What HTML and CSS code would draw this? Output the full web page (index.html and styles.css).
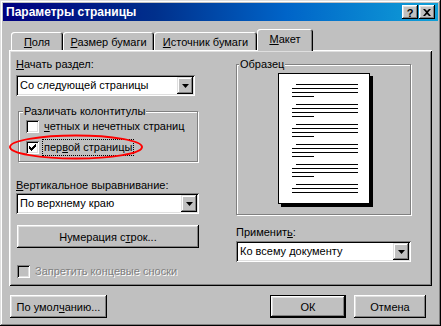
FILE: index.html
```html
<!DOCTYPE html>
<html lang="ru">
<head>
  <meta charset="UTF-8">
  <title>Параметры страницы</title>
  <link rel="stylesheet" href="styles.css">
</head>
<body>
  <div class="window">
    <div class="titlebar">
      <span class="title">Параметры страницы</span>
      <div class="title-buttons">
        <div class="tbtn help">?</div>
        <div class="tbtn">
          <svg width="8" height="7" viewBox="0 0 8 7"><path d="M0 0h2l2 2 2-2h2L5 3.5 8 7H6L4 5 2 7H0l3-3.5z" fill="#000"/></svg>
        </div>
      </div>
    </div>

    <div class="dialog">
      <div class="tabs">
        <div class="tab tab-fields"><u>П</u>оля</div>
        <div class="tab tab-size"><u>Р</u>азмер бумаги</div>
        <div class="tab tab-source"><u>И</u>сточник бумаги</div>
        <div class="tab tab-layout active"><u>М</u>акет</div>
      </div>

      <div class="panel">
        <!-- red mark drawn over the "first page" option -->
        <svg class="mark" width="136" height="28" viewBox="0 0 136 28">
          <ellipse cx="67" cy="13" rx="66" ry="11.5" fill="none" stroke="#ff0000" stroke-width="2"/>
        </svg>

        <div class="col-left">
          <div class="label"><u>Н</u>ачать раздел:</div>
          <div class="combo combo-section">
            <span class="combo-text">Со следующей страницы</span>
            <span class="combo-btn"><svg width="7" height="4"><path d="M0 0h7L3.5 4z" fill="#000"/></svg></span>
          </div>

          <fieldset class="group group-headers">
            <legend>Различать колонтитулы</legend>
            <div class="check-row">
              <span class="check"></span>
              <span class="check-label"><u>ч</u>етных и нечетных страниц</span>
            </div>
            <div class="check-row">
              <span class="check">
                <svg width="7" height="7" viewBox="0 0 7 7" shape-rendering="crispEdges"><path d="M0 2h1v1h1v1h1v-1h1v-1h1v-1h1v-1h1v3h-1v1h-1v1h-1v1h-1v1h-1v-1h-1v-1h-1v-1h-1z" fill="#000"/></svg>
              </span>
              <span class="check-label focus">пер<u>в</u>ой страницы</span>
            </div>
          </fieldset>

          <div class="label label-valign"><u>В</u>ертикальное выравнивание:</div>
          <div class="combo combo-valign">
            <span class="combo-text">По верхнему краю</span>
            <span class="combo-btn"><svg width="7" height="4"><path d="M0 0h7L3.5 4z" fill="#000"/></svg></span>
          </div>

          <div class="button button-wide">Нумерация с<u>т</u>рок...</div>

          <div class="check-row disabled">
            <span class="check"></span>
            <span class="check-label">Запретить концевые сноски</span>
          </div>
        </div>

        <div class="col-right">
          <fieldset class="group group-preview">
            <legend>Образец</legend>
            <div class="page">
              <div class="page-lines">
                <span class="ln first"></span><span class="ln"></span><span class="ln"></span><span class="ln last"></span>
                <span class="ln first"></span><span class="ln"></span><span class="ln"></span><span class="ln last"></span>
                <span class="ln first"></span><span class="ln"></span><span class="ln"></span><span class="ln last"></span>
                <span class="ln first"></span><span class="ln"></span><span class="ln"></span><span class="ln last"></span>
                <span class="ln first"></span><span class="ln"></span><span class="ln"></span><span class="ln last"></span>
                <span class="ln first"></span><span class="ln"></span><span class="ln"></span>
              </div>
            </div>
          </fieldset>

          <div class="label label-apply">Применит<u>ь</u>:</div>
          <div class="combo combo-apply">
            <span class="combo-text">Ко всему документу</span>
            <span class="combo-btn"><svg width="7" height="4"><path d="M0 0h7L3.5 4z" fill="#000"/></svg></span>
          </div>
        </div>
      </div>

      <div class="footer">
        <div class="button button-default-set">По умол<u>ч</u>анию...</div>
        <div class="footer-right">
          <div class="button button-ok">ОК</div>
          <div class="button button-cancel">Отмена</div>
        </div>
      </div>
    </div>
  </div>
</body>
</html>
```

FILE: styles.css
```css
* {
  box-sizing: border-box;
}
html, body {
  margin: 0;
  padding: 0;
  background: #c0c0c0;
  font-family: "Liberation Sans", Arial, sans-serif;
  font-size: 11px;
  color: #000;
}
u {
  text-decoration: underline;
  text-underline-offset: 1px;
}
/* Window frame */
.window {
  width: 441px;
  height: 326px;
  padding: 3px;
  background: #c0c0c0;
  display: flex;
  flex-direction: column;
  box-shadow: inset -1px -1px #000, inset 1px 1px #dfdfdf,
              inset -2px -2px #808080, inset 2px 2px #fff;
}
.titlebar {
  height: 18px;
  flex-shrink: 0;
  padding: 0 3px 0 3px;
  display: flex;
  align-items: center;
  justify-content: space-between;
  background: linear-gradient(to right, #000080 0%, #00308c 35%, #0064c8 65%, #10a0d8 100%);
}
.title {
  color: #fff;
  font-weight: bold;
  font-size: 12px;
}
.title-buttons {
  display: flex;
  gap: 1px;
}
.tbtn {
  width: 16px;
  height: 14px;
  display: flex;
  align-items: center;
  justify-content: center;
  background: #c0c0c0;
  font-weight: bold;
  font-size: 11px;
  box-shadow: inset -1px -1px #000, inset 1px 1px #fff,
              inset -2px -2px #808080, inset 2px 2px #dfdfdf;
}
.tbtn.help {
  padding-top: 1px;
}
/* Dialog body: tabs + panel + buttons */
.dialog {
  flex: 1;
  padding: 8px 6px 0 6px;
  display: flex;
  flex-direction: column;
}
.tabs {
  height: 21px;
  padding-left: 2px;
  display: flex;
  align-items: flex-end;
  position: relative;
  z-index: 2;
}
.tab {
  height: 18px;
  line-height: 18px;
  text-align: center;
  padding-top: 1px;
  background: #c0c0c0;
  border-radius: 3px 3px 0 0;
  box-shadow: inset 1px 1px #fff, inset -1px 0 #000, inset -2px 0 #808080;
}
.tab-fields { width: 52px; }
.tab-size { width: 91px; }
.tab-source { width: 103px; }
.tab-layout { width: 56px; }
.tab.active {
  height: 22px;
  line-height: 20px;
  padding-top: 0;
  margin-bottom: -1px;
}
.panel {
  height: 236px;
  flex-shrink: 0;
  padding: 8px 0 0 7px;
  display: flex;
  position: relative;
  box-shadow: inset 1px 1px #fff, inset -1px -1px #000,
              inset 2px 2px #dfdfdf, inset -2px -2px #808080;
}
.mark {
  position: absolute;
  left: 0;
  top: 84px;
  z-index: 1;
}
.col-left {
  width: 183px;
  display: flex;
  flex-direction: column;
}
.col-right {
  width: 175px;
  margin-left: 37px;
  display: flex;
  flex-direction: column;
}
.label {
  line-height: 13px;
  height: 13px;
}
/* Combo boxes */
.combo {
  height: 21px;
  margin-top: 4px;
  padding: 2px;
  display: flex;
  align-items: center;
  background: #fff;
  box-shadow: inset 1px 1px #808080, inset -1px -1px #fff,
              inset 2px 2px #000, inset -2px -2px #dfdfdf;
}
.combo-section { width: 179px; }
.combo-valign { width: 183px; margin-top: 1px; }
.combo-apply { width: 175px; margin-top: 2px; }
.combo-text {
  flex: 1;
  padding-left: 2px;
  line-height: 17px;
}
.combo-btn {
  width: 16px;
  height: 17px;
  display: flex;
  align-items: center;
  justify-content: center;
  background: #c0c0c0;
  box-shadow: inset -1px -1px #000, inset 1px 1px #dfdfdf,
              inset -2px -2px #808080, inset 2px 2px #fff;
}
.combo-btn svg {
  display: block;
}
/* Etched group boxes */
.group {
  margin: 0;
  border: 1px solid #808080;
  box-shadow: 1px 1px 0 #fff, inset 1px 1px 0 #fff;
}
.group legend {
  padding: 0 1px;
  line-height: 13px;
  background: #c0c0c0;
}
.group-headers {
  width: 180px;
  margin: 9px 0 0 2px;
  height: 57px;
  padding: 0 0 0 7px;
}
.group-headers legend {
  margin-left: -3px;
}
.group-headers .check-row:first-of-type {
  margin-top: -2px;
}
.group-preview {
  height: 157px;
  flex-shrink: 0;
  padding: 2px 0 0 0;
}
.group-preview legend {
  margin-left: 2px;
}
/* Miniature page with a drop shadow */
.page {
  width: 92px;
  height: 131px;
  margin-left: 41px;
  background: #fff;
  border: 1px solid #000;
  box-shadow: 3px 3px 0 #000;
}
.page-lines {
  padding: 10px 0 0 13px;
  display: flex;
  flex-direction: column;
  align-items: flex-start;
}
.ln {
  display: block;
  width: 66px;
  height: 1px;
  margin-bottom: 3px;
  background: #000;
}
.ln.first {
  width: 62px;
  margin-left: 4px;
}
.ln.last {
  width: 22px;
  margin-bottom: 7px;
}
/* Check boxes */
.check-row {
  height: 21px;
  display: flex;
  align-items: center;
}
.check {
  width: 13px;
  height: 13px;
  flex-shrink: 0;
  display: flex;
  align-items: center;
  justify-content: center;
  background: #fff;
  box-shadow: inset 1px 1px #808080, inset -1px -1px #fff,
              inset 2px 2px #000, inset -2px -2px #dfdfdf;
}
.check svg {
  display: block;
}
.check-label {
  margin-left: 3px;
  padding: 1px 1px;
  line-height: 13px;
  border: 1px solid transparent;
}
.check-label.focus {
  border: 1px dotted #000;
}
.check-row.disabled {
  margin-top: 16px;
  margin-left: 1px;
  height: 14px;
}
.check-row.disabled .check {
  background: #c0c0c0;
}
.check-row.disabled .check-label {
  border: none;
  padding: 0;
  margin-left: 5px;
  color: #808080;
  text-shadow: 1px 1px 0 #fff;
}
.label-valign {
  margin-top: 17px;
}
.label-apply {
  margin-top: 11px;
}
/* Push buttons */
.button {
  height: 23px;
  display: flex;
  align-items: center;
  justify-content: center;
  background: #c0c0c0;
  box-shadow: inset -1px -1px #000, inset 1px 1px #fff,
              inset -2px -2px #808080, inset 2px 2px #dfdfdf;
}
.button-wide {
  width: 182px;
  margin: 11px 0 0 1px;
}
.footer {
  margin-top: 9px;
  padding: 0 6px 0 1px;
  display: flex;
  justify-content: space-between;
}
.footer-right {
  display: flex;
  gap: 8px;
}
.button-default-set {
  width: 97px;
}
.button-ok {
  width: 76px;
  border: 1px solid #000;
}
.button-cancel {
  width: 72px;
}
```
